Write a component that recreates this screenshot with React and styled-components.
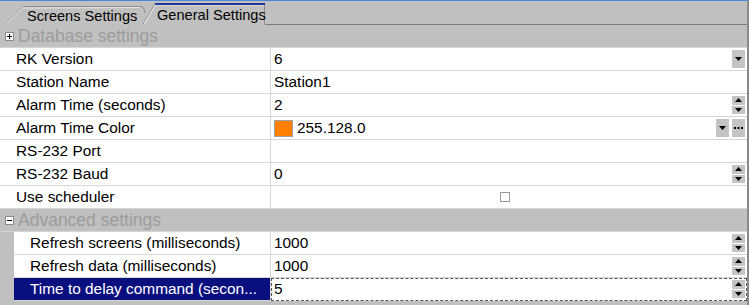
import React from "react";
import styled, { createGlobalStyle } from "styled-components";

const Global = createGlobalStyle`
  html, body { margin: 0; padding: 0; background: #c0c0c0; }
  body { font-family: "Liberation Sans", Arial, sans-serif; }
`;

const Frame = styled.div`
  width: 749px;
  height: 305px;
  box-sizing: border-box;
  background: #c0c0c0;
  border-top: 1px solid #4f86d9;
  border-right: 2px solid #8a8a8a;
  overflow: hidden;
  display: flex;
  flex-direction: column;
`;

const TabStrip = styled.div`
  height: 24px;
  flex: none;
  display: flex;
  align-items: flex-end;
  padding-left: 4px;
`;

const TabLine = styled.div`
  flex: 1;
  height: 1px;
  background: #7a7a7a;
`;

const Tab = styled.div`
  position: relative;
  height: ${(p) => (p.$active ? 23 : 20)}px;
  width: ${(p) => p.$w}px;
  margin-left: ${(p) => p.$ml || 0}px;
  font-size: 14.6px;
  color: #000;
  display: flex;
  align-items: center;
  box-sizing: border-box;
  padding-left: ${(p) => p.$pl}px;
  padding-top: ${(p) => (p.$active ? 3 : 1)}px;
  z-index: ${(p) => (p.$active ? 2 : 1)};
  span { position: relative; z-index: 1; white-space: nowrap; }
  svg { position: absolute; left: 0; top: 0; }
`;

const Grid = styled.div`
  flex: 1;
  display: flex;
  flex-direction: column;
`;

const Category = styled.div`
  height: 23px;
  flex: none;
  display: flex;
  align-items: center;
  padding-left: 5px;
  gap: 4px;
  font-size: 17.5px;
  color: #9c9c9c;
  box-sizing: border-box;
  border-bottom: 1px solid #d6d6d6;
`;

const Expander = styled.span`
  width: 7px;
  height: 7px;
  border: 1px solid #8c8c8c;
  background: #fff;
  position: relative;
  flex: none;
  &::before {
    content: "";
    position: absolute;
    left: 1px;
    top: 3px;
    width: 5px;
    height: 1px;
    background: #000;
  }
  &::after {
    content: "";
    position: absolute;
    left: 3px;
    top: 1px;
    width: 1px;
    height: 5px;
    background: #000;
    display: ${(p) => (p.$open ? "none" : "block")};
  }
`;

const Row = styled.div`
  height: 23px;
  flex: none;
  display: flex;
  box-sizing: border-box;
  padding-left: ${(p) => p.$indent}px;
`;

const Label = styled.div`
  width: ${(p) => 271 - p.$indent}px;
  flex: none;
  box-sizing: border-box;
  padding-left: 16px;
  display: flex;
  align-items: center;
  font-size: 15.4px;
  white-space: nowrap;
  overflow: hidden;
  background: ${(p) => (p.$selected ? "#0a0f80" : "#fff")};
  color: ${(p) => (p.$selected ? "#fff" : "#000")};
  border-bottom: 1px solid #d6d6d6;
  border-right: 1px solid #d6d6d6;
`;

const Value = styled.div`
  flex: 1;
  display: flex;
  align-items: center;
  box-sizing: border-box;
  padding-left: 3px;
  padding-right: 2px;
  background: #fff;
  font-size: 15.4px;
  gap: 4px;
  border-bottom: 1px solid #d6d6d6;
  ${(p) =>
    p.$focus &&
    `outline: 1px dashed #555; outline-offset: -1px; border-bottom-color: transparent;`}
`;

const ValueText = styled.span`
  flex: 1;
  white-space: nowrap;
`;

const Center = styled.div`
  flex: 1;
  display: flex;
  justify-content: center;
  padding-right: 10px;
`;

const CheckBox = styled.span`
  width: 8px;
  height: 8px;
  border: 1px solid #9a9a9a;
  background: #fff;
`;

const Swatch = styled.span`
  width: 19px;
  height: 17px;
  box-sizing: border-box;
  border: 1px solid #a0a0a0;
  background: #ff8000;
  flex: none;
`;

const Buttons = styled.div`
  display: flex;
  gap: 3px;
  align-self: stretch;
  padding: 2px 0;
  box-sizing: border-box;
`;

const DropButton = styled.div`
  width: 13px;
  background: #c4c4c4;
  display: flex;
  align-items: center;
  justify-content: center;
`;

const SpinCol = styled.div`
  display: flex;
  flex-direction: column;
  gap: 1px;
  width: 13px;
`;

const SpinHalf = styled.div`
  flex: 1;
  background: #c4c4c4;
  display: flex;
  align-items: center;
  justify-content: center;
`;

const Tri = ({ up }) => (
  <svg width="7" height="4" viewBox="0 0 7 4">
    {up ? <polygon points="0,4 7,4 3.5,0" fill="#000" /> : <polygon points="0,0 7,0 3.5,4" fill="#000" />}
  </svg>
);

const Dots = () => (
  <svg width="9" height="2" viewBox="0 0 9 2">
    <rect x="0" y="0" width="2" height="2" fill="#000" />
    <rect x="3.5" y="0" width="2" height="2" fill="#000" />
    <rect x="7" y="0" width="2" height="2" fill="#000" />
  </svg>
);

const Drop = () => (
  <DropButton>
    <Tri />
  </DropButton>
);

const Spin = () => (
  <SpinCol>
    <SpinHalf>
      <Tri up />
    </SpinHalf>
    <SpinHalf>
      <Tri />
    </SpinHalf>
  </SpinCol>
);

const PropRow = ({ label, indent = 0, selected, focus, children }) => (
  <Row $indent={indent}>
    <Label $indent={indent} $selected={selected}>
      {label}
    </Label>
    <Value $focus={focus}>{children}</Value>
  </Row>
);

const Simple = ({ text, kind }) => (
  <>
    <ValueText>{text}</ValueText>
    {kind && (
      <Buttons>
        {kind === "drop" && <Drop />}
        {kind === "spin" && <Spin />}
      </Buttons>
    )}
  </>
);

export default function App() {
  return (
    <>
      <Global />
      <Frame>
        <TabStrip>
          <Tab $w={145} $pl={23}>
            <svg width="145" height="20" viewBox="0 0 145 20">
              <path d="M0.5,20 L18,2.5 Q19,1.5 21,1.5 L136,1.5 Q139,1.5 140,4 L141,8" fill="#c0c0c0" stroke="#8a8a8a" />
              <path d="M1.5,19.5 L18.5,3 L136,2.5" fill="none" stroke="#e8e8e8" />
            </svg>
            <span>Screens Settings</span>
          </Tab>
          <Tab $w={124} $ml={-7} $pl={15} $active>
            <svg width="124" height="23" viewBox="0 0 124 23">
              <path d="M0.5,23 L13,2 L122.5,2 L122.5,23" fill="#c0c0c0" stroke="#8a8a8a" />
              <path d="M1.5,23 L13.5,3 L121.5,3" fill="none" stroke="#f2f2f2" />
              <rect x="13" y="1" width="110" height="2" fill="#1c3aa0" />
            </svg>
            <span>General Settings</span>
          </Tab>
          <TabLine />
        </TabStrip>
        <Grid>
          <Category>
            <Expander />
            Database settings
          </Category>
          <PropRow label="RK Version">
            <Simple text="6" kind="drop" />
          </PropRow>
          <PropRow label="Station Name">
            <Simple text="Station1" />
          </PropRow>
          <PropRow label="Alarm Time (seconds)">
            <Simple text="2" kind="spin" />
          </PropRow>
          <PropRow label="Alarm Time Color">
            <Swatch />
            <ValueText>255.128.0</ValueText>
            <Buttons>
              <Drop />
              <DropButton>
                <Dots />
              </DropButton>
            </Buttons>
          </PropRow>
          <PropRow label="RS-232 Port">
            <Simple text="" />
          </PropRow>
          <PropRow label="RS-232 Baud">
            <Simple text="0" kind="spin" />
          </PropRow>
          <PropRow label="Use scheduler">
            <Center>
              <CheckBox />
            </Center>
          </PropRow>
          <Category>
            <Expander $open />
            Advanced settings
          </Category>
          <PropRow label="Refresh screens (milliseconds)" indent={14}>
            <Simple text="1000" kind="spin" />
          </PropRow>
          <PropRow label="Refresh data (milliseconds)" indent={14}>
            <Simple text="1000" kind="spin" />
          </PropRow>
          <PropRow label="Time to delay command (secon..." indent={14} selected focus>
            <Simple text="5" kind="spin" />
          </PropRow>
        </Grid>
      </Frame>
    </>
  );
}
